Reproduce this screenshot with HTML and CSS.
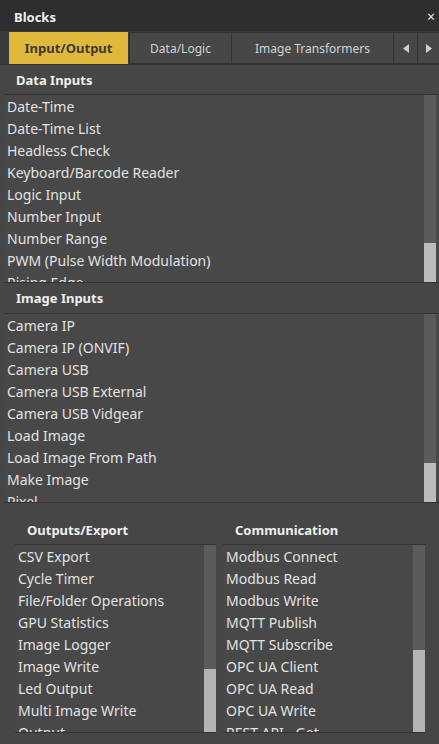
FILE: index.html
```html
<!DOCTYPE html>
<html>
<head>
<meta charset="utf-8">
<link rel="stylesheet" href="styles.css">
</head>
<body>
<div class="panel">
  <div class="titlebar">
    <span class="title">Blocks</span>
    <span class="close">×</span>
  </div>
  <div class="tabs">
    <div class="tab active">Input/Output</div>
    <div class="tab t-data">Data/Logic</div>
    <div class="tab t-img">Image Transformers</div>
    <div class="tab arrow"><svg width="6" height="9" viewBox="0 0 6 9"><path d="M6 0 L0 4.5 L6 9 Z" fill="#cfcfcf"/></svg></div>
    <div class="tab arrow last"><svg width="6" height="9" viewBox="0 0 6 9"><path d="M0 0 L6 4.5 L0 9 Z" fill="#cfcfcf"/></svg></div>
  </div>

  <div class="section">
    <div class="sec-head">Data Inputs</div>
    <div class="list">
      <div class="items">
        <div class="item">Date-Time</div>
        <div class="item">Date-Time List</div>
        <div class="item">Headless Check</div>
        <div class="item">Keyboard/Barcode Reader</div>
        <div class="item">Logic Input</div>
        <div class="item">Number Input</div>
        <div class="item">Number Range</div>
        <div class="item">PWM (Pulse Width Modulation)</div>
        <div class="item">Rising Edge</div>
      </div>
      <div class="scroll"><div class="thumb th-39"></div></div>
    </div>
  </div>

  <div class="section">
    <div class="sec-head sec-head-b">Image Inputs</div>
    <div class="list list-b">
      <div class="items">
        <div class="item">Camera IP</div>
        <div class="item">Camera IP (ONVIF)</div>
        <div class="item">Camera USB</div>
        <div class="item">Camera USB External</div>
        <div class="item">Camera USB Vidgear</div>
        <div class="item">Load Image</div>
        <div class="item">Load Image From Path</div>
        <div class="item">Make Image</div>
        <div class="item">Pixel</div>
      </div>
      <div class="scroll"><div class="thumb th-39"></div></div>
    </div>
  </div>

  <div class="bottom">
    <div class="col col-left">
      <div class="col-head">Outputs/Export</div>
      <div class="list list-c">
        <div class="items">
          <div class="item">CSV Export</div>
          <div class="item">Cycle Timer</div>
          <div class="item">File/Folder Operations</div>
          <div class="item">GPU Statistics</div>
          <div class="item">Image Logger</div>
          <div class="item">Image Write</div>
          <div class="item">Led Output</div>
          <div class="item">Multi Image Write</div>
          <div class="item">Output</div>
        </div>
        <div class="scroll flush"><div class="thumb th-63"></div></div>
      </div>
    </div>
    <div class="col col-right">
      <div class="col-head">Communication</div>
      <div class="list list-c">
        <div class="items">
          <div class="item">Modbus Connect</div>
          <div class="item">Modbus Read</div>
          <div class="item">Modbus Write</div>
          <div class="item">MQTT Publish</div>
          <div class="item">MQTT Subscribe</div>
          <div class="item">OPC UA Client</div>
          <div class="item">OPC UA Read</div>
          <div class="item">OPC UA Write</div>
          <div class="item">REST API - Get</div>
        </div>
        <div class="scroll flush"><div class="thumb th-82"></div></div>
      </div>
    </div>
  </div>
</div>
</body>
</html>
```

FILE: styles.css
```css
html, body {
  margin: 0;
  padding: 0;
}
body {
  width: 439px;
  height: 744px;
  background: #464646;
  overflow: hidden;
  font-family: "Noto Sans", "Open Sans", sans-serif;
}
.panel {
  display: flex;
  flex-direction: column;
  height: 744px;
}
.titlebar {
  height: 31px;
  background: #2e2e2e;
  display: flex;
  align-items: center;
  justify-content: space-between;
  padding: 2px 4px 0 14px;
  box-sizing: border-box;
  flex: none;
}
.title {
  color: #f0f0f0;
  font-weight: bold;
  font-size: 13px;
}
.close {
  color: #e8e8e8;
  font-size: 14px;
  line-height: 1;
}
.tabs {
  height: 34px;
  background: #3a3a3a;
  display: flex;
  padding: 1px 0 0 9px;
  box-sizing: border-box;
  border-bottom: 1px solid #323232;
  flex: none;
}
.tab {
  height: 32px;
  box-sizing: border-box;
  background: #474747;
  border: 1px solid #333;
  border-left: none;
  color: #cdd3da;
  font-size: 12px;
  display: flex;
  align-items: center;
  justify-content: center;
  flex: none;
}
.tab.active {
  width: 119px;
  background: #e0b83b;
  color: #3b3a36;
  font-weight: bold;
  font-size: 13px;
  border: none;
  margin-right: 1px;
}
.t-data { width: 103px; border-left: 1px solid #333; }
.t-img { width: 162px; }
.arrow { width: 24px; }
.arrow.last { width: 21px; border-right: none; }

.section {
  margin-left: 4px;
  flex: none;
}
.sec-head {
  height: 29px;
  display: flex;
  align-items: center;
  padding-left: 12px;
  color: #efefef;
  font-weight: bold;
  font-size: 13px;
  border-bottom: 1px solid #333;
  background: #464646;
}
.sec-head-b {
  height: 30px;
}
.list {
  display: flex;
  height: 187px;
  background: #484848;
  border-bottom: 1px solid #333;
  overflow: hidden;
}
.list-b {
  height: 188px;
}
.items {
  flex: 1;
  overflow: hidden;
  padding: 1px 0 0 3px;
}
.item {
  height: 22px;
  line-height: 22px;
  color: #e2e2e2;
  font-size: 14px;
  white-space: nowrap;
}
.scroll {
  width: 12px;
  margin-right: 3px;
  background: #5b5b5b;
  display: flex;
  flex-direction: column;
  justify-content: flex-end;
  flex: none;
}
.scroll.flush {
  margin-right: 0;
}
.thumb {
  background: #bcbcbc;
}
.th-39 { height: 39px; }
.th-63 { height: 63px; background: #b4b4b4; }
.th-82 { height: 82px; background: #b4b4b4; }

.bottom {
  display: flex;
  gap: 7px;
  padding-left: 15px;
  flex: none;
}
.col-left { width: 201px; }
.col-right { width: 202px; }
.col-head {
  height: 42px;
  box-sizing: border-box;
  padding: 18px 0 0 12px;
  color: #efefef;
  font-weight: bold;
  font-size: 13px;
  border-bottom: 1px solid #333;
}
.list-c {
  height: 187px;
}
```
